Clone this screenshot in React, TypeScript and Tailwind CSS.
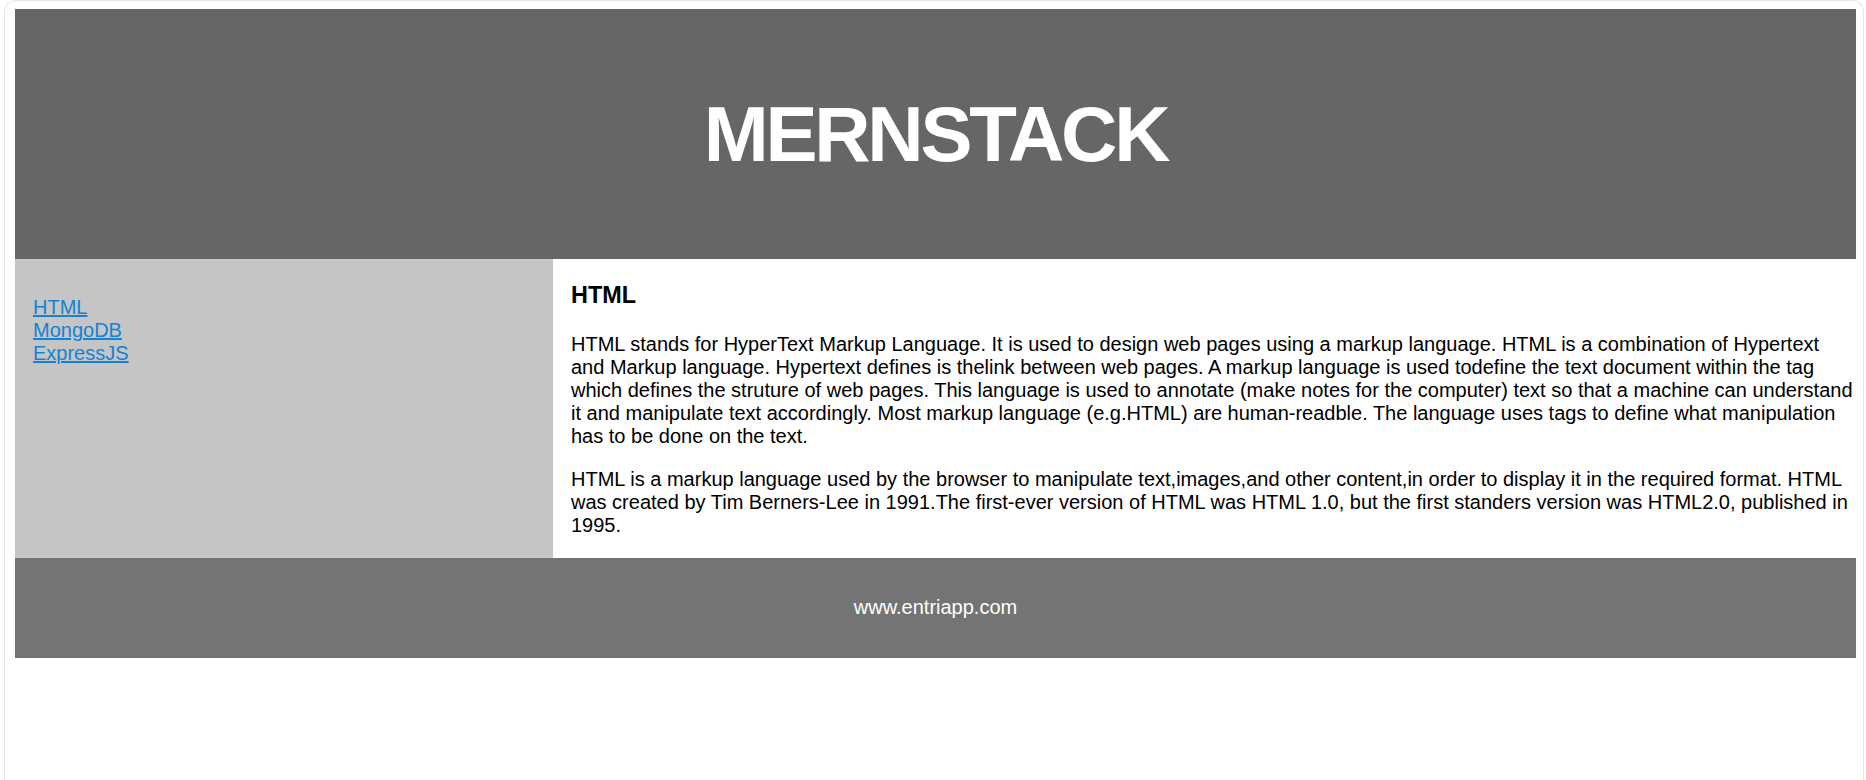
import React from "react";

const links = ["HTML", "MongoDB", "ExpressJS"];

const App = () => {
  return (
    <main className="h-[780px] overflow-hidden bg-white pl-[4px] pr-[2px] font-['Liberation_Sans',Arial,sans-serif] text-[20px] leading-[23px] text-black">
      <div className="h-full rounded-t-[12px] border-x border-t border-[#e6e6e6] pl-[10px] pr-[7px] pt-[8px]">
        {/* header */}
        <div className="flex h-[250px] items-center justify-center bg-[#666666]">
          <h1 className="text-[78px] leading-none font-bold tracking-[-3.2px] text-white">MERNSTACK</h1>
        </div>

        {/* sidebar + content */}
        <div className="flex">
          <div className="w-[538px] shrink-0 bg-[#c5c5c5] pl-[18px] pt-[37px]">
            {links.map((l) => (
              <a key={l} href="#" className="block w-fit text-[#1283d6] underline">
                {l}
              </a>
            ))}
          </div>
          <div className="flex-1 pl-[18px] pb-[1px]">
            <h3 className="my-[23.4px] text-[23.4px] leading-[27px] font-bold">HTML</h3>
            <p className="my-[20px]">
              HTML stands for HyperText Markup Language. It is used to design web pages using a markup language. HTML is a combination of Hypertext and Markup language. Hypertext defines is thelink between web pages. A markup language is used todefine the text document within the tag which defines the struture of web pages. This language is used to annotate (make notes for the computer) text so that a machine can understand it and manipulate text accordingly. Most markup language (e.g.HTML) are human-readble. The language uses tags to define what manipulation has to be done on the text.
            </p>
            <p className="my-[20px]">
              HTML is a markup language used by the browser to manipulate text,images,and other content,in order to display it in the required format. HTML was created by Tim Berners-Lee in 1991.The first-ever version of HTML was HTML 1.0, but the first standers version was HTML2.0, published in 1995.
            </p>
          </div>
        </div>

        {/* footer */}
        <div className="flex h-[100px] items-center justify-center bg-[#747474] text-white">
          www.entriapp.com
        </div>
      </div>
    </main>
  );
};

export default App;
